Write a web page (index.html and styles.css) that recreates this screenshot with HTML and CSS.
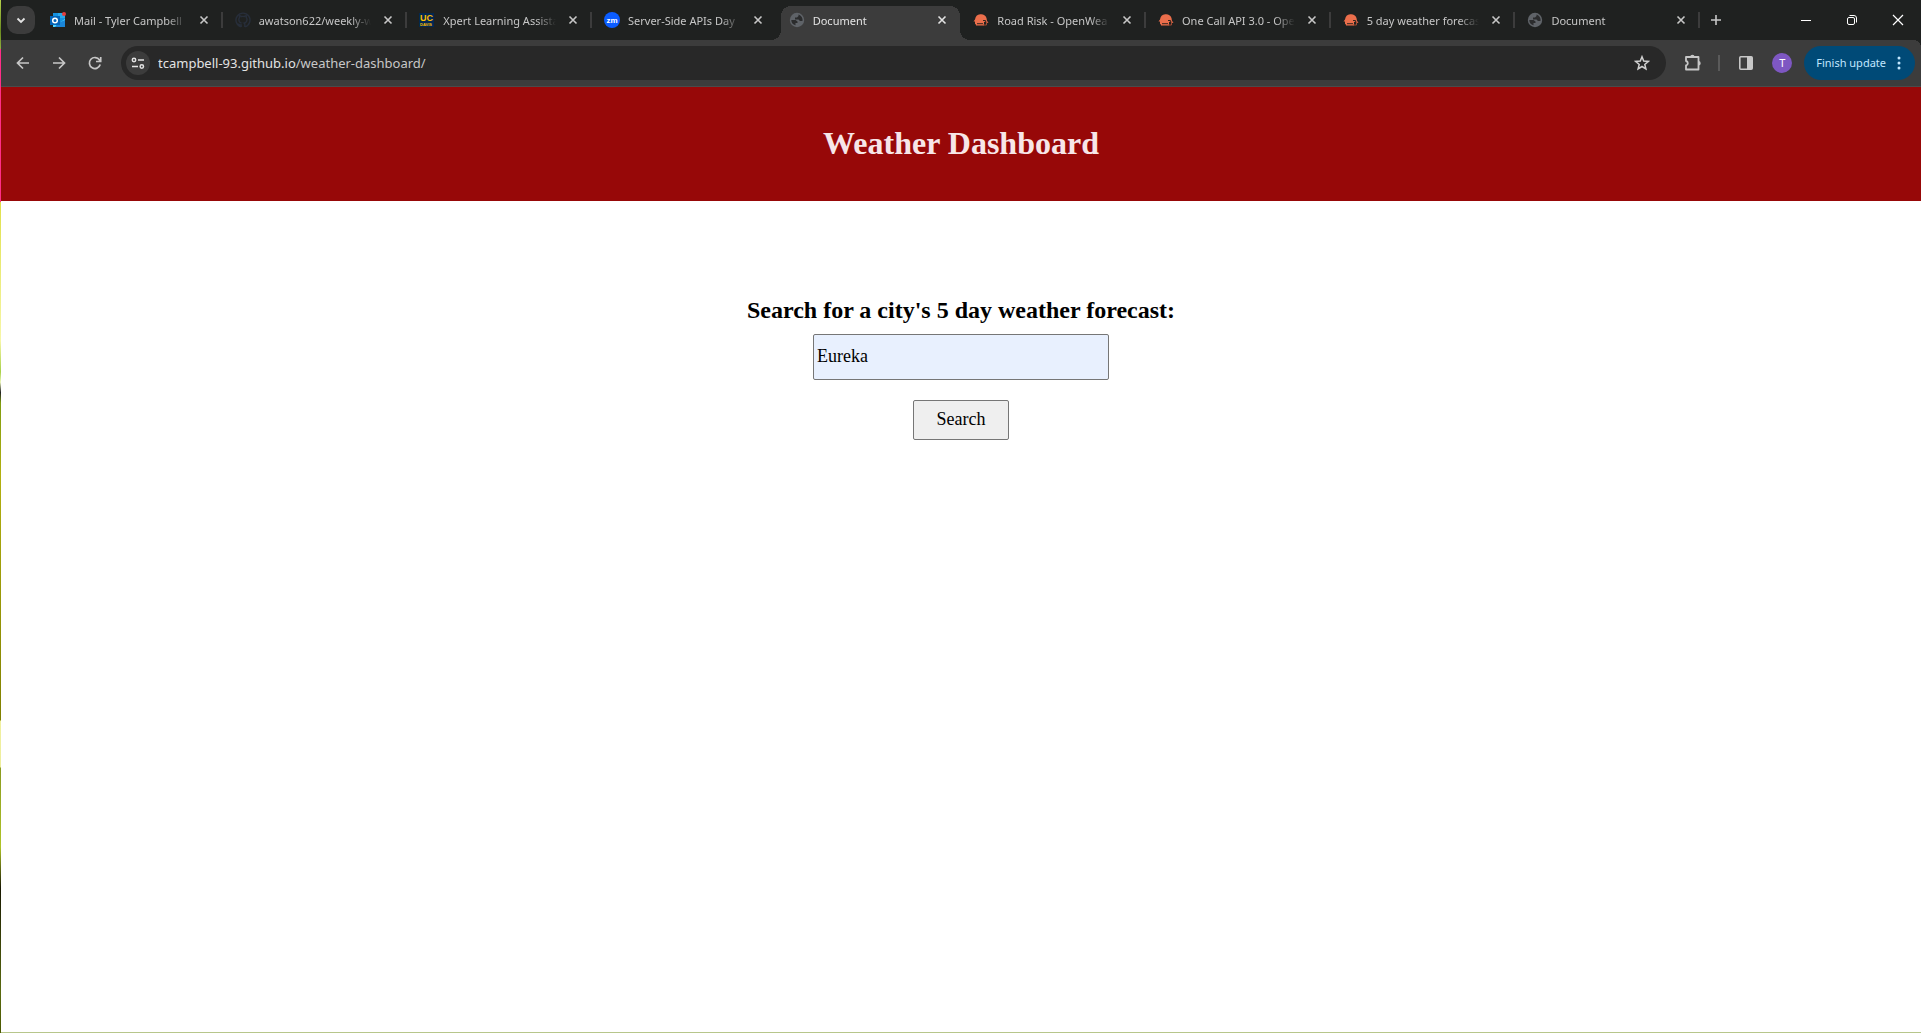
FILE: index.html
```html
<!DOCTYPE html>
<html lang="en">
<head>
<meta charset="utf-8">
<title>Document</title>
<link rel="stylesheet" href="styles.css">
</head>
<body>
<svg class="defs" aria-hidden="true">
  <symbol id="close" viewBox="0 0 10 10"><path d="M1.500 1.500l7 7M8.500 1.500l-7 7" fill="none" stroke="currentColor" stroke-width="1.600"/></symbol>
  <symbol id="globe" viewBox="0 0 16 16"><circle cx="8" cy="8" r="7.200" fill="#5f6368"/><path d="M2.300 8H6.500L8.500 9.500V11H6.500V13.300A5.600 5.600 0 0 1 2.300 8zM9.500 2.600A5.600 5.600 0 0 1 13.500 9H11L9.500 7.500H6V5.500H8L9.500 4z" fill="#2b2c2d"/></symbol>
  <symbol id="sun" viewBox="0 0 16 16"><path d="M2 12.300V9.500H.5L2 7.500A6 6 0 0 1 13.500 6L14 9L15.500 10.500L14 11L13 9.500L11 10V13.500H3V12.300z" fill="#eb6e4b"/><path d="M4 11.700H10M10 8.500H12.500L13 11" stroke="#35251f" fill="none"/><path d="M10 13H13.500V10" stroke="#a04a33" fill="none"/></symbol>
</svg>
<div class="window">
  <div class="desktop-edge"></div>
  <div class="browser">
    <div class="tabstrip">
      <button class="tab-search" aria-label="Search tabs"><svg width="10" height="10" viewBox="0 0 10 10"><path d="M1.500 3.500L5 7l3.500-3.500" fill="none" stroke="#e3e3e3" stroke-width="1.800"/></svg></button>
      <div class="tabs">
        <div class="tab"><svg class="favicon" viewBox="0 0 16 16"><path d="M3 1h12v14H3z" fill="#1490df"/><path d="M8 1h7v5H8z" fill="#28a8ea"/><path d="M3 8l6 3 6-4v8H3z" fill="#50d9ff"/><path d="M8 11l7-3v7H5z" fill="#1a86d9"/><rect y="4" width="10" height="9" fill="#0364b8"/><circle cx="5" cy="8.500" r="2.300" fill="none" stroke="#fff" stroke-width="1.500"/><circle cx="14" cy="2" r="2" fill="#e83c3c"/></svg><span class="title">Mail - Tyler Campbell</span><button class="close" aria-label="Close tab"><svg><use href="#close"/></svg></button></div>
        <div class="tab"><svg class="favicon" viewBox="0 0 16 16"><path d="M5.800 14.800A7 7 0 1 1 10.200 14.800M6.200 15V13C4.500 13.300 3.700 12.500 3.300 11.600M9.800 15V12.500C9.800 11.700 9.600 11.300 9.200 11.100C11 10.800 12 9.800 12 7.600C12 6.700 11.700 6.100 11.200 5.600C11.400 5 11.400 4.300 11.100 3.700C10.300 3.700 9.600 4.300 9.200 4.500A7 7 0 0 0 6.600 4.500C6.200 4.300 5.500 3.700 4.700 3.700C4.400 4.300 4.400 5 4.600 5.600C4.100 6.100 3.800 6.700 3.800 7.600C3.800 9.800 4.800 10.800 6.600 11.100" fill="none" stroke="#272e3a" stroke-width="1.400"/></svg><span class="title">awatson622/weekly-w</span><button class="close" aria-label="Close tab"><svg><use href="#close"/></svg></button></div>
        <div class="tab"><svg class="favicon" viewBox="0 0 16 16"><path d="M0 1h15v14H0z" fill="#022851"/><text class="uc" x="1" y="9">UC</text><text class="davis" x="1" y="14">DAVIS</text></svg><span class="title">Xpert Learning Assista</span><button class="close" aria-label="Close tab"><svg><use href="#close"/></svg></button></div>
        <div class="tab"><svg class="favicon" viewBox="0 0 16 16"><circle cx="8" cy="8" r="8" fill="#0b5cff"/><text class="zm" x="8" y="11" text-anchor="middle">zm</text></svg><span class="title">Server-Side APIs Day</span><button class="close" aria-label="Close tab"><svg><use href="#close"/></svg></button></div>
        <div class="tab active"><svg class="favicon"><use href="#globe"/></svg><span class="title">Document</span><button class="close" aria-label="Close tab"><svg><use href="#close"/></svg></button></div>
        <div class="tab"><svg class="favicon"><use href="#sun"/></svg><span class="title">Road Risk - OpenWea</span><button class="close" aria-label="Close tab"><svg><use href="#close"/></svg></button></div>
        <div class="tab"><svg class="favicon"><use href="#sun"/></svg><span class="title">One Call API 3.0 - Ope</span><button class="close" aria-label="Close tab"><svg><use href="#close"/></svg></button></div>
        <div class="tab"><svg class="favicon"><use href="#sun"/></svg><span class="title">5 day weather forecas</span><button class="close" aria-label="Close tab"><svg><use href="#close"/></svg></button></div>
        <div class="tab"><svg class="favicon"><use href="#globe"/></svg><span class="title">Document</span><button class="close" aria-label="Close tab"><svg><use href="#close"/></svg></button></div>
      </div>
      <button class="new-tab" aria-label="New tab"><svg width="12" height="12" viewBox="0 0 12 12"><path d="M6 1v10M1 6h10" stroke="#c7c7c7" stroke-width="1.600"/></svg></button>
      <div class="window-controls">
        <button aria-label="Minimize"><svg width="12" height="12" viewBox="0 0 12 12"><path d="M1 6.500h10" stroke="#fff"/></svg></button>
        <button aria-label="Restore"><svg width="12" height="12" viewBox="0 0 12 12"><rect x="1.500" y="3.500" width="7" height="7" rx="1.500" fill="none" stroke="#fff"/><path d="M3.500 1.500H8A2.500 2.500 0 0 1 10.500 4V8.500" fill="none" stroke="#fff"/></svg></button>
        <button aria-label="Close"><svg width="12" height="12" viewBox="0 0 12 12"><path d="M1 1l10 10M11 1L1 11" stroke="#fff" stroke-width="1.200"/></svg></button>
      </div>
    </div>
    <div class="toolbar">
      <button class="nav" aria-label="Back"><svg width="16" height="16" viewBox="0 0 16 16"><path d="M14 8H3M8 2.500L2.500 8L8 13.500" fill="none" stroke="currentColor" stroke-width="1.700"/></svg></button>
      <button class="nav" aria-label="Forward"><svg width="16" height="16" viewBox="0 0 16 16"><path d="M2 8h11M8 2.500L13.500 8L8 13.500" fill="none" stroke="currentColor" stroke-width="1.700"/></svg></button>
      <button class="nav" aria-label="Reload"><svg width="16" height="16" viewBox="0 0 16 16"><path d="M13.200 9.500A5.500 5.500 0 1 1 12.500 5L13.500 6M13.700 2v4.500H9" fill="none" stroke="currentColor" stroke-width="1.700"/></svg></button>
      <div class="omnibox">
        <button class="site-info" aria-label="View site information"><svg width="14" height="14" viewBox="0 0 14 14" fill="none" stroke="#e3e3e3" stroke-width="1.500"><circle cx="3" cy="4" r="1.700"/><path d="M7 4h6M1 10.500h6"/><circle cx="10.800" cy="10.500" r="1.700"/></svg></button>
        <div class="url" role="textbox" aria-label="Address">tcampbell-93.github.io<span>/weather-dashboard/</span></div>
        <button class="star" aria-label="Bookmark this tab"><svg width="16" height="16" viewBox="0 0 16 16"><path d="M8 1.800l1.700 4.300 4.600.3-3.500 3 1.100 4.500L8 11.500l-3.900 2.400 1.100-4.500-3.500-3 4.600-.3z" fill="none" stroke="#d0d0d0" stroke-width="1.500"/></svg></button>
      </div>
      <button class="extensions" aria-label="Extensions"><svg width="18" height="18" viewBox="0 0 18 18"><path d="M2 3H14.500V15.500H2V11.500a2.300 2.300 0 0 0 0-4.500z" fill="none" stroke="currentColor" stroke-width="1.800" stroke-linejoin="round"/><path d="M6.200 3a2.200 2.200 0 0 1 4.400 0zM14.500 7a2.200 2.200 0 0 1 0 4.400z" fill="currentColor"/></svg></button>
      <span class="divider"></span>
      <button class="side-panel" aria-label="Side panel"><svg width="16" height="16" viewBox="0 0 16 16"><rect x="1.800" y="1.800" width="12.400" height="12.400" rx="1" fill="none" stroke="currentColor" stroke-width="1.600"/><path d="M9 2h5v12H9z" fill="currentColor"/></svg></button>
      <button class="avatar" aria-label="Profile">T</button>
      <button class="update">Finish update<svg width="4" height="16" viewBox="0 0 4 16" fill="#c2e7ff"><circle cx="2" cy="3" r="1.500"/><circle cx="2" cy="8" r="1.500"/><circle cx="2" cy="13" r="1.500"/></svg></button>
    </div>
    <header class="banner"><h1>Weather Dashboard</h1></header>
    <main>
      <form class="search">
        <label for="city">Search for a city's 5 day weather forecast:</label>
        <input id="city" type="text" value="Eureka">
        <button type="button">Search</button>
      </form>
    </main>
  </div>
</div>
</body>
</html>
```
FILE: styles.css
```css
* { box-sizing: border-box; }
body { margin: 0; background: #fff; font-family: "Liberation Serif", "Times New Roman", serif; }
button { margin: 0; padding: 0; border: 0; background: none; color: inherit; font: inherit; }
svg { display: block; flex: none; }
.defs { position: absolute; width: 0; height: 0; }

.window { display: flex; min-height: 100vh; }
.desktop-edge {
  flex: none;
  width: 1px;
  background: linear-gradient(#b5d24a 0, #6b8c20 3%, #8fae3c 4.7%, #ff2d87 4.8%, #ff2d87 19.5%, #dfe04a 19.6%, #f7f7a8 33%, #a8d048 36%, #eef8c0 37%, #222 38%, #7f9c10 39%, #b3b010 46%, #808000 69.7%, #f0f0a0 69.8%, #eeee9c 74.2%, #8a9a20 74.4%, #b0c428 82%, #181800 86%, #5a6a10 96%, #4a5800 100%);
}
.browser { display: flex; flex: 1; flex-direction: column; min-width: 0; border-bottom: 1px solid #b7c68b; }

/* Tab strip */
.tabstrip, .toolbar { font-family: "Noto Sans", "Segoe UI", sans-serif; font-size: 11px; }
.tabstrip { display: flex; align-items: center; height: 40px; padding-left: 6px; background: #1f2120; color: #c7c7c7; }
.tab-search { display: grid; flex: none; place-items: center; width: 28px; height: 28px; margin-right: 3px; border-radius: 10px; background: #3c3c3c; }
.tabs { display: flex; flex: 1; min-width: 0; height: 40px; padding-top: 6px; }
.tab { position: relative; display: flex; flex: 1; align-items: center; min-width: 0; height: 34px; padding: 0 14px 6px 12px; }
.tab::after { content: ""; position: absolute; top: 6px; right: 0; width: 2px; height: 16px; background: #3c3c3c; }
.tab.active::after, .tab:has(+ .active)::after { display: none; }
.active { z-index: 0; color: #e3e3e3; }
/* Rounded top corners and outward-curving feet of the active tab */
.active::before {
  content: ""; position: absolute; z-index: -1; inset: 0 -9px 0 -6px;
  background:
    radial-gradient(circle at 0 0, transparent 10px, #3c3c3c 10px) left bottom / 10px 10px no-repeat,
    radial-gradient(circle at 100% 0, transparent 10px, #3c3c3c 10px) right bottom / 10px 10px no-repeat,
    linear-gradient(#3c3c3c, #3c3c3c) center bottom / calc(100% - 20px) 24px no-repeat,
    radial-gradient(circle at 10px 10px, #3c3c3c 10px, transparent 10px) 10px 0 / 10px 10px no-repeat,
    radial-gradient(circle at 0 10px, #3c3c3c 10px, transparent 10px) calc(100% - 10px) 0 / 10px 10px no-repeat,
    linear-gradient(#3c3c3c, #3c3c3c) center top / calc(100% - 40px) 10px no-repeat;
}
.favicon { width: 16px; height: 16px; }
.title {
  flex: 1; min-width: 0; margin: 0 12px 0 8px; padding-top: 2px; overflow: hidden; line-height: 20px; white-space: nowrap;
  -webkit-mask-image: linear-gradient(90deg, #000 calc(100% - 20px), transparent);
  mask-image: linear-gradient(90deg, #000 calc(100% - 20px), transparent);
}
.close, .close svg { flex: none; width: 10px; height: 10px; }
.uc { fill: #ffbf00; font: bold 9px "Liberation Sans", sans-serif; }
.davis { fill: #ffbf00; font: bold 4px "Liberation Sans", sans-serif; }
.zm { fill: #fff; font: bold 8px "Liberation Sans", sans-serif; }
.new-tab { display: grid; flex: none; place-items: center; width: 32px; height: 28px; }
.window-controls { display: flex; flex: none; width: 154px; margin-left: 35px; padding-left: 16px; }
.window-controls button { display: grid; place-items: center; width: 46px; height: 40px; }

/* Toolbar */
.toolbar {
  display: flex; align-items: center; height: 47px; padding: 0 6px 1px; border-bottom: 1px solid #4a4a4a; color: #c7c7c7;
  background: radial-gradient(circle at 0 100%, transparent 8px, #1f2120 8px) right top / 8px 8px no-repeat, #3c3c3c;
}
.nav { display: grid; flex: none; place-items: center; width: 32px; height: 32px; margin-right: 4px; }
.omnibox { display: flex; flex: 1; align-items: center; min-width: 0; height: 34px; margin-left: 6px; padding: 0 16px 0 5px; border-radius: 17px; background: #282828; }
.site-info { display: grid; flex: none; place-items: center; width: 24px; height: 24px; border-radius: 12px; background: #3c3c3c; }
.url { flex: 1; min-width: 0; margin-left: 8px; overflow: hidden; color: #e3e3e3; font-size: 13px; line-height: 20px; white-space: nowrap; }
.url span { color: #c7c7c7; }
.extensions { margin-left: 18px; }
.divider { flex: none; width: 2px; height: 16px; margin: 0 18px 0 16px; background: #5a5a5a; }
.avatar { flex: none; width: 20px; height: 20px; margin: 0 12px 0 18px; border-radius: 10px; background: #7e57c2; color: #fff; line-height: 20px; }
.update { display: flex; flex: none; align-items: center; gap: 11px; height: 34px; padding: 0 14px 0 12px; border-radius: 17px; background: #004a77; color: #c2e7ff; }

/* Page */
.banner { padding: 38px 16px 40px; background: #970808; color: #f7e6e8; text-align: center; }
.banner h1 { margin: 0; font-size: 32px; line-height: 36px; }
main { flex: 1; padding: 95px 16px 16px; }
.search { display: flex; flex-direction: column; align-items: center; }
.search label { font-size: 24px; font-weight: bold; line-height: 28px; }
.search input { width: 296px; height: 46px; margin: 10px 0 20px; padding: 0 3px 1px; border: 1px solid #767676; border-radius: 2px; background: #e8f0fe; color: #000; font: 18px "Liberation Serif", serif; }
.search button { width: 96px; height: 40px; padding-bottom: 2px; border: 1px solid #767676; border-radius: 2px; background: #efefef; color: #000; font-size: 18px; }
```
